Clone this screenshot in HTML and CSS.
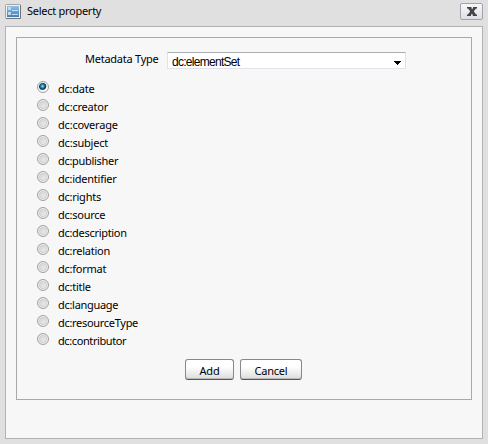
FILE: index.html
```html
<!DOCTYPE html>
<html lang="en">
<head><meta charset="utf-8"><title>Select property</title><link rel="stylesheet" href="styles.css"></head>
<body>
<div class="dialog">
  <header class="titlebar">
    <svg class="form-icon" width="17" height="16" viewBox="0 0 17 16">
      <defs><linearGradient id="blue" x1="0" y1="0" x2="0" y2="1"><stop offset="0" stop-color="#8dc1eb"/><stop offset="1" stop-color="#3f7fbd"/></linearGradient></defs>
      <rect x=".5" y=".5" width="15" height="14" rx="1" fill="#f4f0ea" stroke="#aaa39b"/>
      <path d="M1 14.500h14.500V1" fill="none" stroke="#77726d"/>
      <rect x="2" y="2" width="12" height="11" fill="url(#blue)"/>
      <path d="M3 3h3v3H3zM3 8h3v3H3z" fill="#b9dcf5"/>
      <path d="M7 6.500h6M7 10.500h6" stroke="#c2e0f5"/>
    </svg>
    <h1>Select property</h1>
    <button class="close" aria-label="Close"><svg width="10" height="9" viewBox="0 0 10 9"><path d="M0 0h4.500v1L5 2.500 6 1V0h4v1.500H9L6.800 4.300 9 7.500h1V9H5.800V8L5 6.500 4 8v1H0V7.500h1l2.200-3.200L1 1.500H0z" fill="#444"/></svg></button>
  </header>
  <main class="body">
    <form class="panel">
      <div class="field">
        <span class="label">Metadata Type</span>
        <div class="select"><span>dc:elementSet</span><svg width="7" height="4" viewBox="0 0 7 4" shape-rendering="crispEdges"><path d="M0 0h7v1H6v1H5v1H4v1H3V3H2V2H1V1H0z"/></svg></div>
      </div>
      <ul class="options">
        <li><i class="radio checked"></i><span>dc:date</span></li>
        <li><i class="radio"></i><span>dc:creator</span></li>
        <li><i class="radio"></i><span>dc:coverage</span></li>
        <li><i class="radio"></i><span>dc:subject</span></li>
        <li><i class="radio"></i><span>dc:publisher</span></li>
        <li><i class="radio"></i><span>dc:identifier</span></li>
        <li><i class="radio"></i><span>dc:rights</span></li>
        <li><i class="radio"></i><span>dc:source</span></li>
        <li><i class="radio"></i><span>dc:description</span></li>
        <li><i class="radio"></i><span>dc:relation</span></li>
        <li><i class="radio"></i><span>dc:format</span></li>
        <li><i class="radio"></i><span>dc:title</span></li>
        <li><i class="radio"></i><span>dc:language</span></li>
        <li><i class="radio"></i><span>dc:resourceType</span></li>
        <li><i class="radio"></i><span>dc:contributor</span></li>
      </ul>
      <div class="actions"><button class="btn add" type="button">Add</button><button class="btn cancel" type="button">Cancel</button></div>
    </form>
  </main>
</div>
</body>
</html>
```
FILE: styles.css
```css
* { box-sizing: border-box; }
body { margin: 0; background: #e0e0e0; color: #000; font: 11px/18px Tahoma, "Noto Sans", sans-serif; letter-spacing: -.25px; }
.dialog { height: 444px; padding: 0 5px 5px; display: flex; flex-direction: column; }
.titlebar { height: 26px; display: flex; align-items: flex-start; }
.form-icon { margin-top: 4px; }
h1 { margin: 3px auto 0 5px; font-size: 11px; line-height: 16px; font-weight: 400; letter-spacing: -.27px; }
.close { width: 23px; height: 17px; margin: 3px 0 0; padding: 0 0 1px; display: flex; align-items: center; justify-content: center; border: 1px solid #a2a2aa; border-radius: 2px; background: linear-gradient(#f8f8fa, #dedee6); }
.body { height: 413px; padding: 10px; border: 1px solid #b2b2b2; background: #f7f7f7; }
.panel { width: 456px; height: 363px; border: 1px solid #a9a9a9; }
.field { display: flex; padding: 14px 0 0 68px; }
.label { width: 82px; line-height: 14px; }
.select { width: 239px; height: 17px; margin-bottom: 1px; padding: 0 4px 0 4px; display: flex; justify-content: space-between; border: 1px solid #e2e3ea; border-top-color: #abadb3; border-radius: 1px; background: #fff; font: 12px/18px "Liberation Sans", sans-serif; letter-spacing: -.72px; }
.select svg { margin-top: 8px; }
.options { list-style: none; margin: 8px 0 0; padding: 0 0 0 20px; }
.options li { height: 18px; display: flex; }
.options span { margin-left: 9px; line-height: 22px; }
.options li:nth-child(2) span,
.options li:nth-child(3) span,
.options li:nth-child(4) span { letter-spacing: -.2px; }
.options li:nth-child(5) span,
.options li:nth-child(9) span,
.options li:nth-child(13) span,
.options li:nth-child(14) span { letter-spacing: -.3px; }
.options li:nth-child(15) span { letter-spacing: -.4px; }
.radio { width: 12px; height: 12px; margin-top: 3px; border: 1px solid #a0a1a1; border-radius: 50%; background: linear-gradient(135deg, #cbced1, #f3f3f3); box-shadow: inset 0 0 0 1px #f4f4f4, inset 0 0 0 2px #cccfd1; }
.checked { background: radial-gradient(circle at 45% 42%, #9ee2fa 0, #2e94c6 18%, #0c354f 40%, #fff 54%); box-shadow: inset 0 0 0 1px #f4f4f4; }
.actions { display: flex; gap: 6px; margin: 11px 0 0 168px; }
.btn { height: 21px; padding: 2px 0 0; border: 1px solid #888; border-bottom-color: #555; border-radius: 3px; background: linear-gradient(#fff 35%, #dcdcdc); box-shadow: inset 0 -1px #bcbcbc; color: #000; font: inherit; line-height: 17px; letter-spacing: -.2px; }
.add { width: 49px; }
.cancel { width: 62px; }
```
